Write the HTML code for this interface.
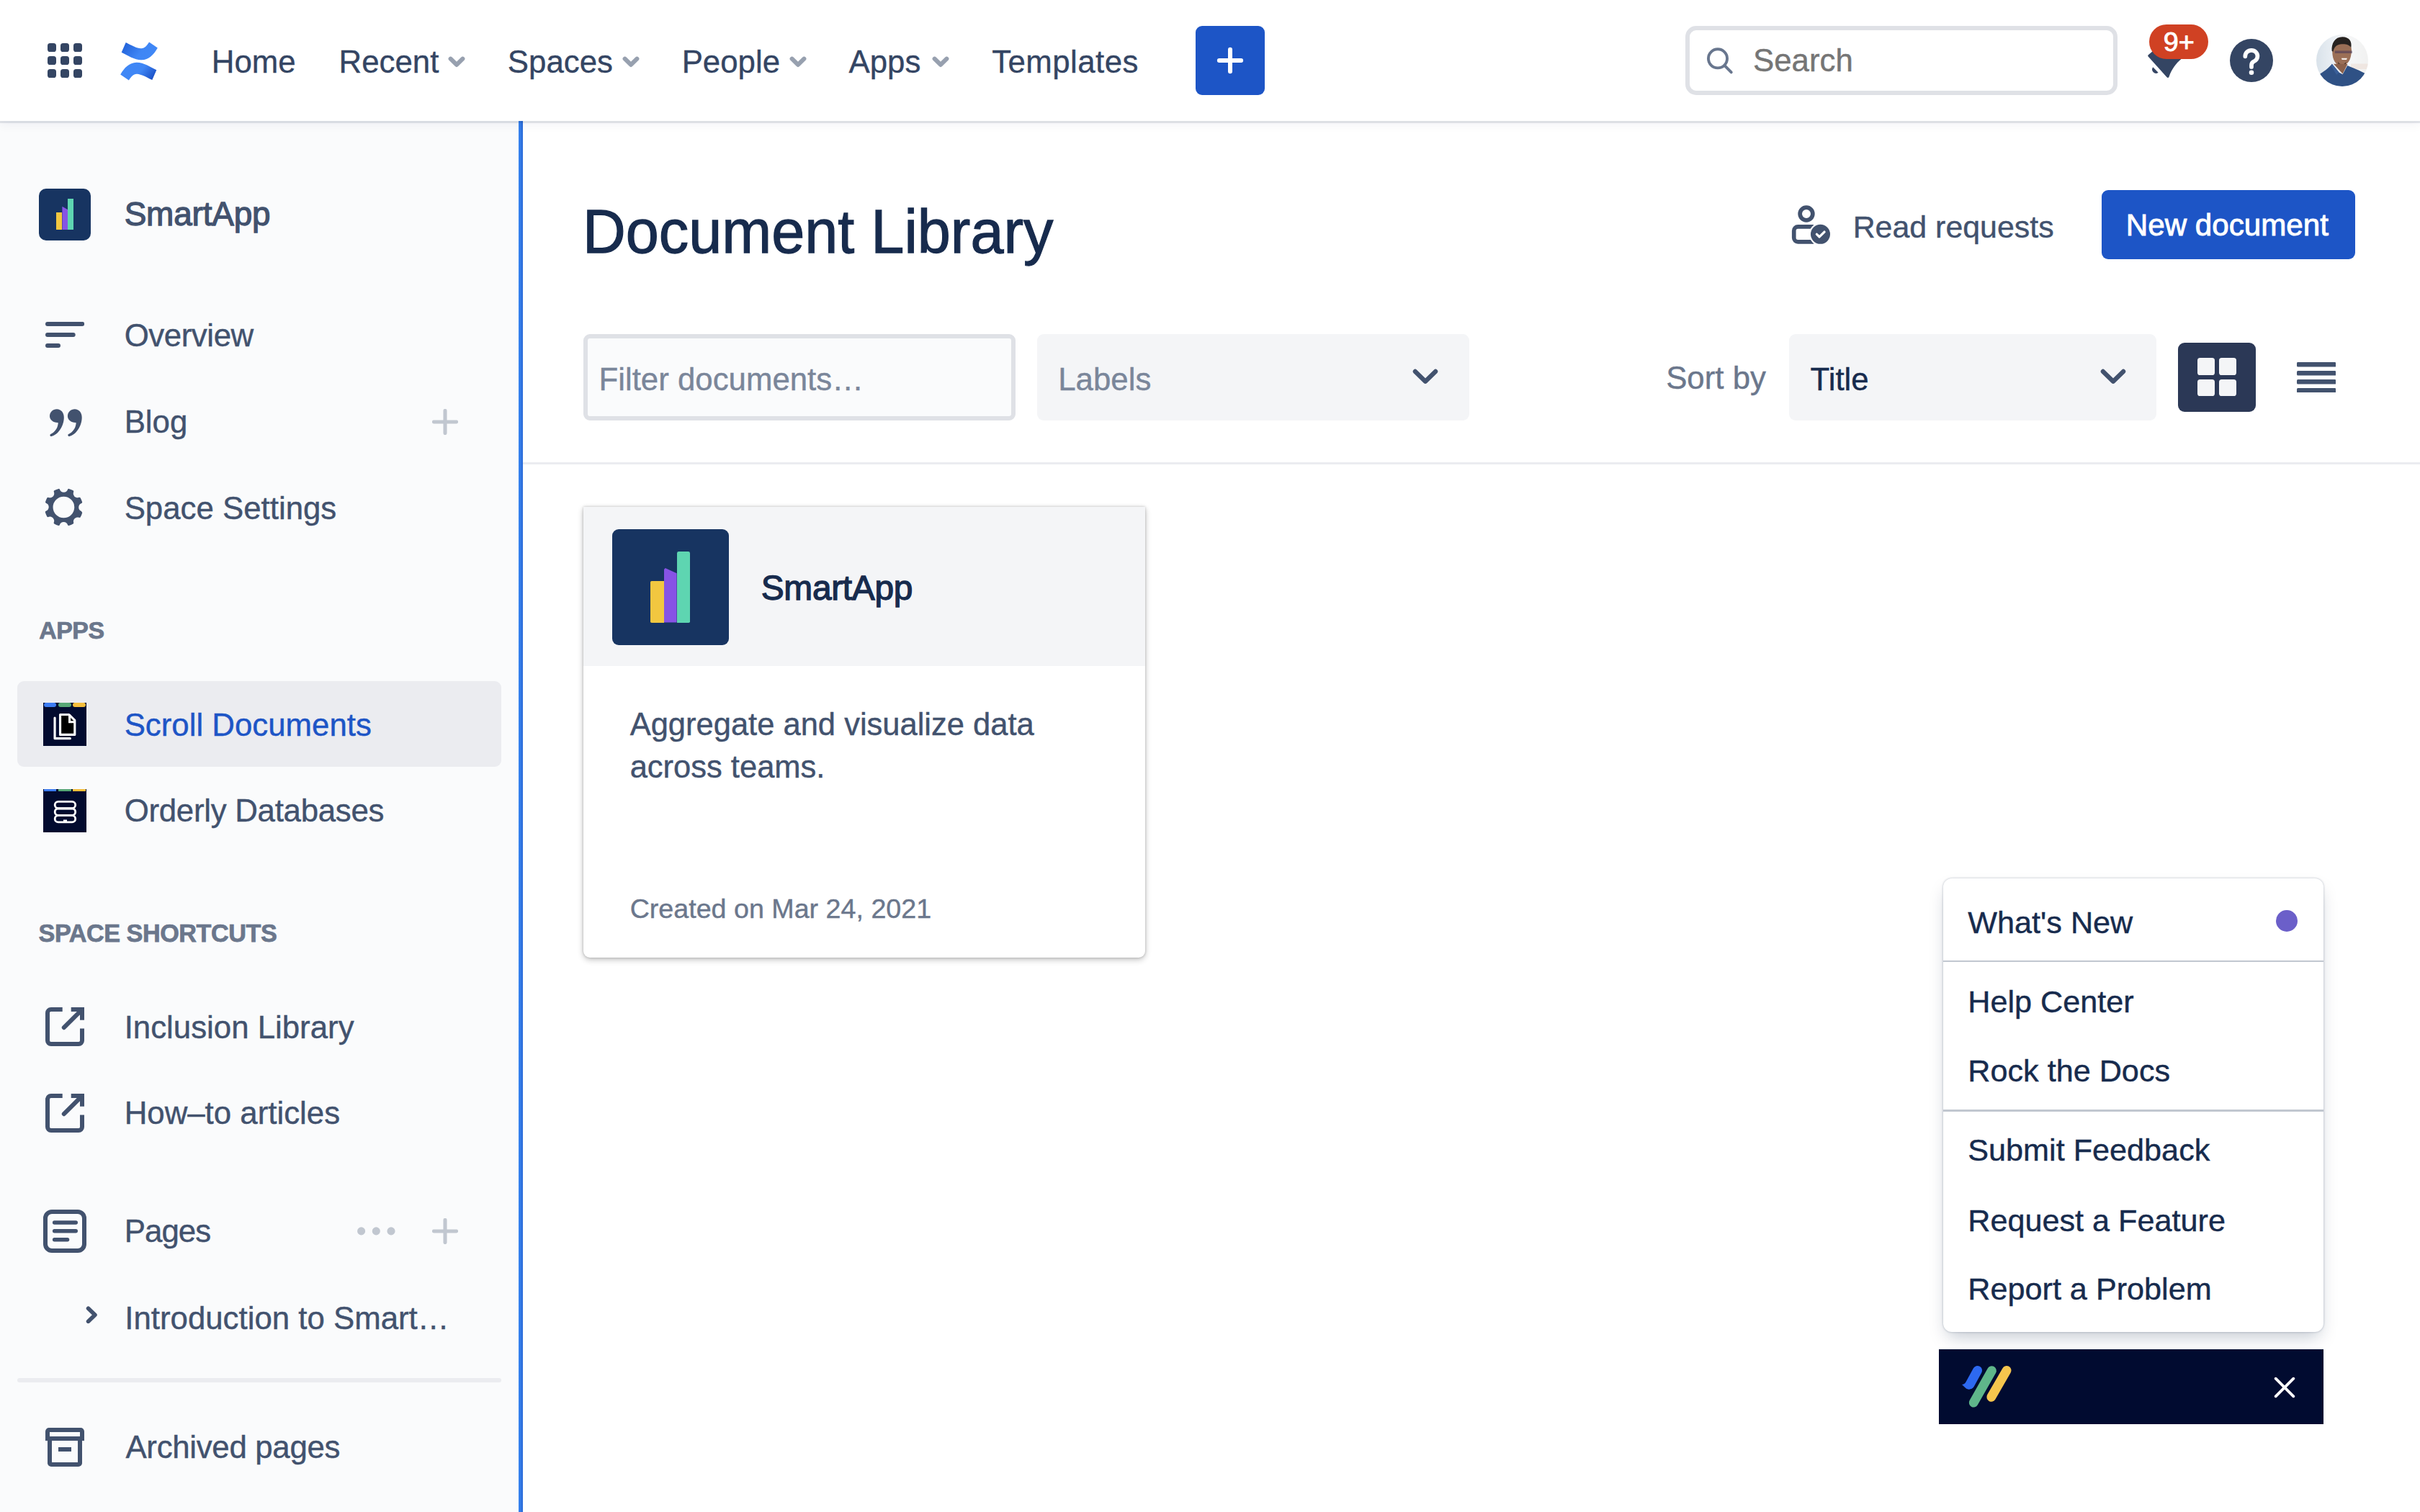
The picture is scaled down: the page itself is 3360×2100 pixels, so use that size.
<!DOCTYPE html>
<html><head><meta charset="utf-8">
<style>
*{box-sizing:border-box;margin:0;padding:0}
html,body{width:3360px;height:2100px;overflow:hidden;background:#fff}
#root{position:relative;width:1120px;height:700px;zoom:3;overflow:hidden;font-family:"Liberation Sans", sans-serif;color:#172B4D;background:#fff}
.abs{position:absolute}
.t{position:absolute;white-space:nowrap;line-height:1;-webkit-text-stroke:0.14px currentColor}
@media (max-width:1500px){html,body{width:1120px;height:700px} #root{zoom:1}}
</style></head>
<body><div id="root">
<div class="abs" style="left:0px;top:0px;width:1120px;height:56px;background:#fff;box-shadow:0 1px 0 rgba(9,30,66,0.10),0 1px 5px rgba(9,30,66,0.07);z-index:1"></div>
<svg class="abs" style="left:22px;top:20px;z-index:2" width="16" height="16" viewBox="0 0 16 16"><g fill="#344563"><rect x="0" y="0" width="4" height="4" rx="1.2"/><rect x="6" y="0" width="4" height="4" rx="1.2"/><rect x="12" y="0" width="4" height="4" rx="1.2"/><rect x="0" y="6" width="4" height="4" rx="1.2"/><rect x="6" y="6" width="4" height="4" rx="1.2"/><rect x="12" y="6" width="4" height="4" rx="1.2"/><rect x="0" y="12" width="4" height="4" rx="1.2"/><rect x="6" y="12" width="4" height="4" rx="1.2"/><rect x="12" y="12" width="4" height="4" rx="1.2"/></g></svg>
<svg class="abs" style="left:55.2px;top:19.3px;z-index:2" width="18" height="18" viewBox="0 0 18 18"><defs><linearGradient id="cgA" x1="0" y1="0.3" x2="1" y2="0.7"><stop offset="0" stop-color="#2262D9"/><stop offset="0.55" stop-color="#3F86F5"/><stop offset="1" stop-color="#4088F6"/></linearGradient>
<linearGradient id="cgB" x1="1" y1="0.7" x2="0" y2="0.3"><stop offset="0" stop-color="#1A4FC6"/><stop offset="0.45" stop-color="#3F86F5"/><stop offset="1" stop-color="#4088F6"/></linearGradient></defs>
<path d="M2.9,0.3 L0.9,4.9 C4,6.4 7,8.5 10.2,8.4 C13.5,8.3 15.8,6 17.6,2.8 L13.7,0.2 C12.5,2 11.6,3.2 9.9,3.1 C8,3 5.5,1.6 2.9,0.3 Z" fill="url(#cgA)"/>
<path d="M15.1,17.7 L17.1,13.1 C14,11.6 11,9.5 7.8,9.6 C4.5,9.7 2.2,12 0.4,15.2 L4.3,17.8 C5.5,16 6.4,14.8 8.1,14.9 C10,15 12.5,16.4 15.1,17.7 Z" fill="url(#cgB)"/></svg>
<div class="t" style="left:97.95px;top:21.42px;font-size:14.6px;color:#344563;font-weight:normal;letter-spacing:0px;-webkit-text-stroke:0.12px currentColor;z-index:2">Home</div>
<div class="t" style="left:156.85px;top:21.42px;font-size:14.6px;color:#344563;font-weight:normal;letter-spacing:0px;-webkit-text-stroke:0.12px currentColor;z-index:2">Recent</div>
<div class="t" style="left:234.95px;top:21.42px;font-size:14.6px;color:#344563;font-weight:normal;letter-spacing:0px;-webkit-text-stroke:0.12px currentColor;z-index:2">Spaces</div>
<div class="t" style="left:315.55px;top:21.42px;font-size:14.6px;color:#344563;font-weight:normal;letter-spacing:0px;-webkit-text-stroke:0.12px currentColor;z-index:2">People</div>
<div class="t" style="left:392.85px;top:21.42px;font-size:14.6px;color:#344563;font-weight:normal;letter-spacing:0px;-webkit-text-stroke:0.12px currentColor;z-index:2">Apps</div>
<div class="t" style="left:459.05px;top:21.42px;font-size:14.6px;color:#344563;font-weight:normal;letter-spacing:0.15px;-webkit-text-stroke:0.12px currentColor;z-index:2">Templates</div>
<svg class="abs" style="left:207.3px;top:26.0px;z-index:2;overflow:visible" width="8" height="5.2" viewBox="0 0 8 5.2"><path d="M1.2 1.2l2.8 2.8 2.8-2.8" stroke="#97A0AF" stroke-width="2" fill="none" stroke-linecap="round" stroke-linejoin="round"/></svg>
<svg class="abs" style="left:288px;top:26.0px;z-index:2;overflow:visible" width="8" height="5.2" viewBox="0 0 8 5.2"><path d="M1.2 1.2l2.8 2.8 2.8-2.8" stroke="#97A0AF" stroke-width="2" fill="none" stroke-linecap="round" stroke-linejoin="round"/></svg>
<svg class="abs" style="left:365.3px;top:26.0px;z-index:2;overflow:visible" width="8" height="5.2" viewBox="0 0 8 5.2"><path d="M1.2 1.2l2.8 2.8 2.8-2.8" stroke="#97A0AF" stroke-width="2" fill="none" stroke-linecap="round" stroke-linejoin="round"/></svg>
<svg class="abs" style="left:431.3px;top:26.0px;z-index:2;overflow:visible" width="8" height="5.2" viewBox="0 0 8 5.2"><path d="M1.2 1.2l2.8 2.8 2.8-2.8" stroke="#97A0AF" stroke-width="2" fill="none" stroke-linecap="round" stroke-linejoin="round"/></svg>
<div class="abs" style="left:553.4px;top:12px;width:32px;height:32px;background:#1D55C6;border-radius:3px;z-index:2"></div>
<svg class="abs" style="left:562.4px;top:21px;z-index:2" width="14" height="14" viewBox="0 0 14 14"><path d="M7 1.95v10.1M1.95 7h10.1" stroke="#fff" stroke-width="2" stroke-linecap="round"/></svg>
<div class="abs" style="left:780px;top:12px;width:200px;height:32px;background:#fff;border:2px solid #DFE1E6;border-radius:5px;z-index:2;box-sizing:border-box"></div>
<svg class="abs" style="left:789px;top:20.5px;z-index:2" width="14" height="15" viewBox="0 0 14 15"><circle cx="6.0" cy="6.45" r="4.35" stroke="#68768E" stroke-width="1.3" fill="none"/><path d="M9.2 9.7l3.05 3.1" stroke="#68768E" stroke-width="1.3" stroke-linecap="round"/></svg>
<div class="t" style="left:811.35px;top:20.59px;font-size:14.6px;color:#757575;font-weight:normal;letter-spacing:0px;z-index:2">Search</div>
<svg class="abs" style="left:986.67px;top:6.67px;z-index:2" width="30" height="35" viewBox="0 0 30 35"><path d="M7.4 19.3 Q7.3 18.9 7.8 18.6 L12 15 L20 13 L22.9 20.6 C20.4 22.6 18.3 25.6 17.2 28.8 Q16.8 29.7 16.1 29 Z" fill="#344563"/><path d="M9.75 24.45 A1.75 1.75 0 0 0 12.2 26.9 Z" fill="#344563"/></svg>
<div class="abs" style="left:994.6px;top:11.3px;width:27.4px;height:16px;background:#D04123;border-radius:8px;z-index:2"></div>
<div class="t" style="left:1001.25px;top:13.18px;font-size:12.6px;color:#fff;font-weight:normal;letter-spacing:0px;z-index:2;-webkit-text-stroke:0.3px #fff">9+</div>
<div class="abs" style="left:1032px;top:17.9px;width:20px;height:20px;background:#344563;border-radius:50%;z-index:2"></div>
<svg class="abs" style="left:1032px;top:17.9px;z-index:2" width="20" height="20" viewBox="0 0 20 20"><path d="M7.1 8.1 C7.1 6.4 8.4 5.3 10 5.3 C11.6 5.3 12.8 6.5 12.8 8 C12.8 9.4 11.9 10.1 10.9 10.6 C10.2 11 10 11.4 10 12.2 V13" stroke="#fff" stroke-width="1.9" fill="none" stroke-linecap="round"/><circle cx="10" cy="15.6" r="1.1" fill="#fff"/></svg>
<svg class="abs" style="left:1072px;top:16px;z-index:2;filter:blur(0.2px)" width="24" height="24" viewBox="0 0 24 24"><defs><clipPath id="avc"><circle cx="12" cy="12" r="12"/></clipPath>
<linearGradient id="avbg" x1="0" y1="0" x2="1" y2="0"><stop offset="0" stop-color="#d9e2ea"/><stop offset="0.3" stop-color="#e9eef3"/><stop offset="0.6" stop-color="#f6f7f8"/><stop offset="1" stop-color="#f1f1f0"/></linearGradient></defs>
<g clip-path="url(#avc)">
<rect width="24" height="24" fill="url(#avbg)"/>
<rect x="16" y="13.5" width="8" height="2.5" fill="#e8c9b8" opacity="0.3"/>
<path d="M7.4 6.5 C7.3 10.5 8 13.6 11.3 14.6 C14.6 14.4 16.2 11.8 16.3 7.2 C16.3 4.8 14.8 3.6 12 3.6 C9 3.6 7.5 4.6 7.4 6.5 Z" fill="#9b6f56"/>
<path d="M7.2 7.6 C6.9 4.2 8.6 1.1 12.1 1.1 C15.3 1.1 16.6 3.3 16.1 6 C15.2 4.6 13.6 4.3 11.8 4.4 C9.8 4.5 8.3 5.4 7.8 7.9 Z" fill="#27221f"/>
<path d="M8.6 7.5 H16.6 V8.7 H8.6 Z" fill="#4b3a58" opacity="0.6"/>
<path d="M11.6 10.9 H14.3 L14 11.7 H11.9 Z" fill="#f4ece6"/>
<path d="M10 12.5 C10.8 14.2 12.8 14.4 13.8 12.7 L13.5 14.3 C12.4 15 11 14.8 10.2 13.9 Z" fill="#2c211d" opacity="0.8"/>
<path d="M8 13.6 L14.5 13.7 L12.2 18.2 Z" fill="#8a604a"/>
<path d="M-1 20 C1 18.4 4.5 17 7.3 13.6 L10.6 17.6 L12.2 18.4 L14.4 14.3 C17 15.5 20 16.4 24.5 19 V25 H-1 Z" fill="#2f5185"/>
<path d="M7.3 13.6 L10.6 17.6 L9.4 18.6 L6.8 14.5 Z" fill="#3d64a0" opacity="0.7"/>
</g></svg>
<div class="abs" style="left:0px;top:56px;width:240px;height:644px;background:#FAFBFC;"></div>
<div class="abs" style="left:240px;top:56px;width:2px;height:644px;background:linear-gradient(90deg,#3A87F3,#2A6AD6);"></div>
<div class="abs" style="left:18px;top:87.3px;width:24px;height:24px;border-radius:3.3px;background:#173461">
<div class="abs" style="left:7.9px;top:11px;width:2.9px;height:8.2px;background:#F2C740"></div>
<div class="abs" style="left:10.8px;top:8.3px;width:2.6px;height:10.9px;background:#8753E5;clip-path:polygon(0 0,100% 14%,100% 100%,0 100%)"></div>
<div class="abs" style="left:13.4px;top:4.8px;width:2.7px;height:14.4px;background:#5ED5B1"></div>
</div>
<div class="t" style="left:57.55px;top:91.77px;font-size:15.3px;color:#42526E;font-weight:normal;letter-spacing:-0.05px;-webkit-text-stroke:0.42px #42526E">SmartApp</div>
<svg class="abs" style="left:20.9px;top:149px;" width="18.1" height="12" viewBox="0 0 18.1 12"><path d="M1 1h16.1M1 6h11.9M1 11h5" stroke="#42526E" stroke-width="2" stroke-linecap="round"/></svg>
<div class="t" style="left:57.55px;top:147.89px;font-size:14.6px;color:#42526E;font-weight:normal;letter-spacing:-0.14px;">Overview</div>
<svg class="abs" style="left:22.9px;top:189.2px;" width="15.2" height="13" viewBox="0 0 15.2 13"><g fill="#42526E"><path d="M3.3,0.1 C5.3,0.1 6.6,1.8 6.6,3.9 C6.6,7.9 3.9,11.9 0.8,12.7 C0.2,12.8 -0.1,12 0.4,11.7 C2.6,10.6 3.9,8.5 3.9,6.3 C1.7,6.4 0,5 0,3.3 C0,1.5 1.5,0.1 3.3,0.1 Z"/><path transform="translate(8.3 0)" d="M3.3,0.1 C5.3,0.1 6.6,1.8 6.6,3.9 C6.6,7.9 3.9,11.9 0.8,12.7 C0.2,12.8 -0.1,12 0.4,11.7 C2.6,10.6 3.9,8.5 3.9,6.3 C1.7,6.4 0,5 0,3.3 C0,1.5 1.5,0.1 3.3,0.1 Z"/></g></svg>
<div class="t" style="left:57.55px;top:187.99px;font-size:14.6px;color:#42526E;font-weight:normal;letter-spacing:0px;">Blog</div>
<svg class="abs" style="left:200px;top:189.3px;" width="12" height="12" viewBox="0 0 12 12"><path d="M6 0.8v10.4M0.8 6h10.4" stroke="#C1C7D0" stroke-width="1.7" stroke-linecap="round"/></svg>
<svg class="abs" style="left:18.1px;top:223.4px;" width="23.6" height="23.6" viewBox="0 0 24 24"><path fill="#42526E" fill-rule="evenodd" d="M11.701 16.7a5.002 5.002 0 1 1 0-10.003 5.002 5.002 0 0 1 0 10.004m8.368-3.117a1.995 1.995 0 0 1-1.346-1.885c0-.876.563-1.613 1.345-1.885a.48.48 0 0 0 .315-.574 8.947 8.947 0 0 0-.836-1.993.477.477 0 0 0-.598-.195 2.04 2.04 0 0 1-1.29.08 1.988 1.988 0 0 1-1.404-1.395 2.04 2.04 0 0 1 .076-1.297.478.478 0 0 0-.196-.6 8.98 8.98 0 0 0-1.975-.826.479.479 0 0 0-.574.314 1.995 1.995 0 0 1-1.885 1.346 1.994 1.994 0 0 1-1.884-1.345.482.482 0 0 0-.575-.315c-.708.2-1.379.485-2.004.842a.47.47 0 0 0-.198.589c.192.455.225.98.056 1.473a2.002 2.002 0 0 1-2.585 1.16.54.54 0 0 0-.65.215 8.96 8.96 0 0 0-.792 1.901.477.477 0 0 0 .298.574 1.997 1.997 0 0 1 1.284 1.863c0 .876-.563 1.613-1.345 1.885a.48.48 0 0 0-.315.574c.204.708.49 1.376.84 2.001a.474.474 0 0 0 .584.194 2.048 2.048 0 0 1 1.348-.074 1.992 1.992 0 0 1 1.34 1.344c.141.469.094.936-.067 1.354a.476.476 0 0 0 .196.6 8.97 8.970 0 0 0 1.975.826.479.479 0 0 0 .574-.314 1.995 1.995 0 0 1 1.885-1.346c.876 0 1.613.563 1.885 1.345a.48.48 0 0 0 .574.315 8.936 8.936 0 0 0 2.001-.84.474.474 0 0 0 .194-.583 2.040 2.040 0 0 1 .062-1.314 1.993 1.993 0 0 1 1.275-1.111 2.04 2.04 0 0 1 1.3.08.478.478 0 0 0 .6-.195c.349-.625.628-1.294.826-1.996a.48.48 0 0 0-.316-.574"/></svg>
<div class="t" style="left:57.55px;top:227.89px;font-size:14.6px;color:#42526E;font-weight:normal;letter-spacing:0px;">Space Settings</div>
<div class="t" style="left:18.05px;top:286.38px;font-size:11.3px;color:#6B778C;font-weight:bold;letter-spacing:-0.15px;-webkit-text-stroke:0.25px #6B778C">APPS</div>
<div class="abs" style="left:8px;top:315.4px;width:224px;height:39.6px;background:#EBECF0;border-radius:3px"></div>
<div class="abs" style="left:20px;top:325.2px;width:20px;height:20px;background:#020B2F;overflow:hidden">
<div class="abs" style="left:0.2px;top:0;width:5.9px;height:2.1px;background:#3D7CF2;border-radius:1px"></div>
<div class="abs" style="left:7.1px;top:0;width:5.9px;height:2.1px;background:#57A776;border-radius:1px"></div>
<div class="abs" style="left:13.8px;top:0;width:5.9px;height:2.1px;background:#F6BE3C;border-radius:1px"></div>
<svg class="abs" style="left:0;top:0" width="20" height="20" viewBox="0 0 20 20"><path d="M5.35 7v9.55h7.1" stroke="#fff" stroke-width="1.05" fill="none" stroke-linecap="round" stroke-linejoin="round"/><path d="M7.85 5.5h4.1l2.65 2.65v6.65h-6.75z" fill="#000" stroke="#fff" stroke-width="1.05" stroke-linejoin="round"/><path d="M12.2 5.5v3.4h2.4" fill="none" stroke="#fff" stroke-width="1.05"/></svg>
</div>
<div class="t" style="left:57.55px;top:328.19px;font-size:14.6px;color:#1D55C6;font-weight:normal;letter-spacing:0px;">Scroll Documents</div>
<div class="abs" style="left:20px;top:365.2px;width:20px;height:20px;background:#020B2F;overflow:hidden">
<div class="abs" style="left:0.2px;top:0;width:5.9px;height:1.05px;background:#3D7CF2"></div>
<div class="abs" style="left:7.1px;top:0;width:5.9px;height:1.05px;background:#57A776"></div>
<div class="abs" style="left:13.8px;top:0;width:5.9px;height:1.05px;background:#F6BE3C"></div>
<svg class="abs" style="left:0;top:0" width="20" height="20" viewBox="0 0 20 20"><g stroke="#fff" stroke-width="0.95" fill="none"><rect x="5.4" y="5.8" width="9.5" height="3.1" rx="1.55"/><rect x="5.4" y="9.0" width="9.5" height="3.1" rx="1.55"/><rect x="5.4" y="12.2" width="9.5" height="3.1" rx="1.55"/></g><path d="M9.7 15.3v-0.7h0.9v0.7" stroke="#fff" stroke-width="0.8" fill="none"/></svg>
</div>
<div class="t" style="left:57.55px;top:367.89px;font-size:14.6px;color:#42526E;font-weight:normal;letter-spacing:-0.09px;">Orderly Databases</div>
<div class="t" style="left:17.85px;top:426.20px;font-size:11.4px;color:#6B778C;font-weight:bold;letter-spacing:-0.15px;-webkit-text-stroke:0.25px #6B778C">SPACE SHORTCUTS</div>
<svg class="abs" style="left:21px;top:466.3px;" width="18" height="18" viewBox="0 0 18 18"><g stroke="#42526E" stroke-width="2" fill="none"><path d="M7.9 1H2.6A1.6 1.6 0 0 0 1 2.6V15.4A1.6 1.6 0 0 0 2.6 17H15.4A1.6 1.6 0 0 0 17 15.4V9.8"/><path d="M11.9 1H17V5.9"/><path d="M8.6 9.4L16.4 1.6" stroke-linecap="round"/></g></svg>
<div class="t" style="left:57.55px;top:468.39px;font-size:14.6px;color:#42526E;font-weight:normal;letter-spacing:0px;">Inclusion Library</div>
<svg class="abs" style="left:21px;top:506.3px;" width="18" height="18" viewBox="0 0 18 18"><g stroke="#42526E" stroke-width="2" fill="none"><path d="M7.9 1H2.6A1.6 1.6 0 0 0 1 2.6V15.4A1.6 1.6 0 0 0 2.6 17H15.4A1.6 1.6 0 0 0 17 15.4V9.8"/><path d="M11.9 1H17V5.9"/><path d="M8.6 9.4L16.4 1.6" stroke-linecap="round"/></g></svg>
<div class="t" style="left:57.55px;top:508.09px;font-size:14.6px;color:#42526E;font-weight:normal;letter-spacing:0px;">How&#8211;to articles</div>
<svg class="abs" style="left:20px;top:560px;" width="20" height="20" viewBox="0 0 20 20"><rect x="1" y="1" width="18" height="18" rx="3" stroke="#42526E" stroke-width="2" fill="none"/><path d="M5.2 6h9.9M5.2 9.9h9.9M5.2 13.9h6" stroke="#42526E" stroke-width="1.8" stroke-linecap="round"/></svg>
<div class="t" style="left:57.55px;top:562.69px;font-size:14.6px;color:#42526E;font-weight:normal;letter-spacing:-0.3px;">Pages</div>
<svg class="abs" style="left:165px;top:567.6px;" width="18.2" height="4.6" viewBox="0 0 18.2 4.6"><g fill="#C1C7D0"><circle cx="2.2" cy="2.3" r="1.85"/><circle cx="9.1" cy="2.3" r="1.85"/><circle cx="16" cy="2.3" r="1.85"/></g></svg>
<svg class="abs" style="left:200px;top:564.1px;" width="12" height="12" viewBox="0 0 12 12"><path d="M6 0.8v10.4M0.8 6h10.4" stroke="#C1C7D0" stroke-width="1.7" stroke-linecap="round"/></svg>
<svg class="abs" style="left:39.7px;top:604.6px;" width="6" height="8.2" viewBox="0 0 6 8.2"><path d="M1.2 1.1l3.1 3-3.1 3" stroke="#42526E" stroke-width="1.9" fill="none" stroke-linecap="round" stroke-linejoin="round"/></svg>
<div class="t" style="left:57.75px;top:602.89px;font-size:14.6px;color:#42526E;font-weight:normal;letter-spacing:0px;">Introduction to Smart&#8230;</div>
<div class="abs" style="left:8px;top:638px;width:224px;height:2px;background:#EBECF0;border-radius:1px"></div>
<svg class="abs" style="left:21px;top:661px;" width="18" height="18" viewBox="0 0 18 18"><path fill="#42526E" fill-rule="evenodd" d="M0 1.7A1.7 1.7 0 0 1 1.7 0H16.3A1.7 1.7 0 0 1 18 1.7V6H0Z M2 2H16V4H2Z"/><path fill="#42526E" d="M1 6H3V16H15V6H17V16.3A1.7 1.7 0 0 1 15.3 18H2.7A1.7 1.7 0 0 1 1 16.3Z M6 9H12V11H6Z"/></svg>
<div class="t" style="left:58.15px;top:662.69px;font-size:14.6px;color:#42526E;font-weight:normal;letter-spacing:-0.1px;">Archived pages</div>
<div class="t" style="left:269.75px;top:93.14px;font-size:28.6px;color:#172B4D;font-weight:normal;letter-spacing:0px;-webkit-text-stroke:0.42px #172B4D;transform:scaleX(0.965);transform-origin:0 0">Document Library</div>
<svg class="abs" style="left:829px;top:95px;" width="18" height="18" viewBox="0 0 18 18"><circle cx="7" cy="4" r="2.95" stroke="#42526E" stroke-width="1.9" fill="none"/><path d="M10.4 9.95H3.1A1.85 1.85 0 0 0 1.25 11.8V15.1A1.85 1.85 0 0 0 3.1 16.95H10.4" stroke="#42526E" stroke-width="1.9" fill="none"/><circle cx="13.5" cy="13.45" r="5.2" fill="#fff"/><circle cx="13.5" cy="13.45" r="4.5" fill="#42526E"/><path d="M11.8 13.45L13.05 14.65L15.35 12.35" stroke="#fff" stroke-width="1.1" fill="none" stroke-linecap="round" stroke-linejoin="round"/></svg>
<div class="t" style="left:857.55px;top:98.02px;font-size:14.3px;color:#42526E;font-weight:normal;letter-spacing:0px;">Read requests</div>
<div class="abs" style="left:972.6px;top:88px;width:117.4px;height:32px;background:#1D55C6;border-radius:3px"></div>
<div class="t" style="left:983.95px;top:97.49px;font-size:14.05px;color:#fff;font-weight:normal;letter-spacing:0px;-webkit-text-stroke:0.3px #fff">New document</div>
<div class="abs" style="left:270px;top:154.7px;width:200px;height:40px;background:#FAFBFC;border:2px solid #DFE1E6;border-radius:3px;box-sizing:border-box"></div>
<div class="t" style="left:277.15px;top:168.22px;font-size:14.6px;color:#7A869A;font-weight:normal;letter-spacing:0px;">Filter documents&#8230;</div>
<div class="abs" style="left:480px;top:154.7px;width:200px;height:40px;background:#F4F5F7;border-radius:3px"></div>
<div class="t" style="left:489.75px;top:168.22px;font-size:14.6px;color:#7A869A;font-weight:normal;letter-spacing:0px;">Labels</div>
<svg class="abs" style="left:653.7px;top:170.8px;" width="12" height="7.5" viewBox="0 0 12 7.5"><path d="M1.3 1.3l4.7 4.6 4.7-4.6" stroke="#42526E" stroke-width="2.1" fill="none" stroke-linecap="round" stroke-linejoin="round"/></svg>
<div class="t" style="left:771.05px;top:167.76px;font-size:14.6px;color:#6B778C;font-weight:normal;letter-spacing:0px;">Sort by</div>
<div class="abs" style="left:828px;top:154.7px;width:170px;height:40px;background:#F4F5F7;border-radius:3px"></div>
<div class="t" style="left:837.85px;top:168.26px;font-size:14.6px;color:#172B4D;font-weight:normal;letter-spacing:0px;">Title</div>
<svg class="abs" style="left:971.9px;top:170.8px;" width="12" height="7.5" viewBox="0 0 12 7.5"><path d="M1.3 1.3l4.7 4.6 4.7-4.6" stroke="#42526E" stroke-width="2.1" fill="none" stroke-linecap="round" stroke-linejoin="round"/></svg>
<div class="abs" style="left:1008px;top:158.7px;width:36px;height:32px;background:#2B3856;border-radius:3px"></div>
<div class="abs" style="left:1017px;top:165.6px;width:7.95px;height:7.95px;background:#F4F5F7;border-radius:1.2px"></div>
<div class="abs" style="left:1017px;top:175.55px;width:7.95px;height:7.95px;background:#F4F5F7;border-radius:1.2px"></div>
<div class="abs" style="left:1026.95px;top:165.6px;width:7.95px;height:7.95px;background:#F4F5F7;border-radius:1.2px"></div>
<div class="abs" style="left:1026.95px;top:175.55px;width:7.95px;height:7.95px;background:#F4F5F7;border-radius:1.2px"></div>
<svg class="abs" style="left:1062.9px;top:167.6px;" width="18.1" height="14.2" viewBox="0 0 18.1 14.2"><g fill="#42526E"><rect x="0" y="0" width="18.1" height="2.2" rx="0.5"/><rect x="0" y="4" width="18.1" height="2.2" rx="0.5"/><rect x="0" y="8" width="18.1" height="2.2" rx="0.5"/><rect x="0" y="12" width="18.1" height="2.2" rx="0.5"/></g></svg>
<div class="abs" style="left:242px;top:214px;width:878px;height:1px;background:#EBECF0;"></div>
<div class="abs" style="left:270px;top:234.6px;width:260px;height:208.8px;background:#fff;border-radius:0 0 3px 3px;box-shadow:0 1px 3px rgba(0,0,0,0.24),0 0 1.2px rgba(0,0,0,0.22)"></div>
<div class="abs" style="left:270px;top:234.6px;width:260px;height:73.8px;background:#F4F5F7;"></div>
<div class="abs" style="left:283.2px;top:245px;width:54px;height:53.7px;background:#173461;border-radius:3px">
<div class="abs" style="left:17.7px;top:24.1px;width:6.3px;height:19.1px;background:#F2C740;border-radius:0.6px 0 0 0.6px"></div>
<div class="abs" style="left:24px;top:18px;width:6px;height:25.2px;background:#8753E5;clip-path:polygon(0 3%,12% 0,100% 9.5%,100% 100%,0 100%)"></div>
<div class="abs" style="left:30px;top:10.2px;width:6.3px;height:33px;background:#5ED5B1;border-radius:0.8px 0.8px 0.6px 0"></div>
</div>
<div class="t" style="left:352.25px;top:264.28px;font-size:15.95px;color:#172B4D;font-weight:normal;letter-spacing:-0.1px;-webkit-text-stroke:0.45px #172B4D">SmartApp</div>
<div class="t" style="left:291.55px;top:328.31px;font-size:14.5px;color:#42526E;font-weight:normal;letter-spacing:0px;">Aggregate and visualize data</div>
<div class="t" style="left:291.55px;top:347.95px;font-size:14.5px;color:#42526E;font-weight:normal;letter-spacing:0px;">across teams.</div>
<div class="t" style="left:291.55px;top:414.66px;font-size:12.55px;color:#6B778C;font-weight:normal;letter-spacing:0.0px;">Created on Mar 24, 2021</div>
<div class="abs" style="left:899.4px;top:406.5px;width:176px;height:210.2px;background:#fff;border-radius:4px;box-shadow:0 4px 8px -2px rgba(9,30,66,0.25),0 0 1px rgba(9,30,66,0.31)"></div>
<div class="t" style="left:910.75px;top:420.03px;font-size:14.4px;color:#172B4D;font-weight:normal;letter-spacing:0px;">What's New</div>
<div class="abs" style="left:1053.3px;top:421.2px;width:10px;height:10px;background:#6B5FC9;border-radius:50%"></div>
<div class="abs" style="left:899.4px;top:444.6px;width:176px;height:0.7px;background:#C1C7D0;"></div>
<div class="t" style="left:910.75px;top:456.53px;font-size:14.4px;color:#172B4D;font-weight:normal;letter-spacing:0px;">Help Center</div>
<div class="t" style="left:910.75px;top:488.63px;font-size:14.4px;color:#172B4D;font-weight:normal;letter-spacing:0px;">Rock the Docs</div>
<div class="abs" style="left:899.4px;top:513.8px;width:176px;height:0.9px;background:#C1C7D0;"></div>
<div class="t" style="left:910.75px;top:525.33px;font-size:14.4px;color:#172B4D;font-weight:normal;letter-spacing:0px;">Submit Feedback</div>
<div class="t" style="left:910.75px;top:557.96px;font-size:14.4px;color:#172B4D;font-weight:normal;letter-spacing:0px;">Request a Feature</div>
<div class="t" style="left:910.75px;top:589.69px;font-size:14.4px;color:#172B4D;font-weight:normal;letter-spacing:0px;">Report a Problem</div>
<div class="abs" style="left:897.2px;top:624.5px;width:178.2px;height:34.8px;background:#010B30;"></div>
<svg class="abs" style="left:900px;top:626.67px;" width="34" height="30" viewBox="0 0 34 30"><g stroke-linecap="round" stroke-width="4.3" fill="none"><path d="M21.8 7.9L13.4 22.7" stroke="#5FB68A"/><path d="M28.7 7.8L21.6 20.1" stroke="#F5C54D"/></g><path d="M15.2 7.8 L11.7 14.2" stroke="#2D69F0" stroke-width="4.3" stroke-linecap="round"/><path d="M8 14.3 C9.4 14.2 10 13 10.8 11.9 L13.5 15.2 C12.8 16.4 11.8 16.7 10.8 16.5 C9.8 16.3 9 15.2 8 14.3 Z" fill="#2D69F0"/></svg>
<svg class="abs" style="left:1052.4px;top:637.2px;" width="10" height="10" viewBox="0 0 10 10"><path d="M0.9 0.9l8.2 8.2M9.1 0.9L0.9 9.1" stroke="#fff" stroke-width="1.3" stroke-linecap="round"/></svg>
</div></body></html>
